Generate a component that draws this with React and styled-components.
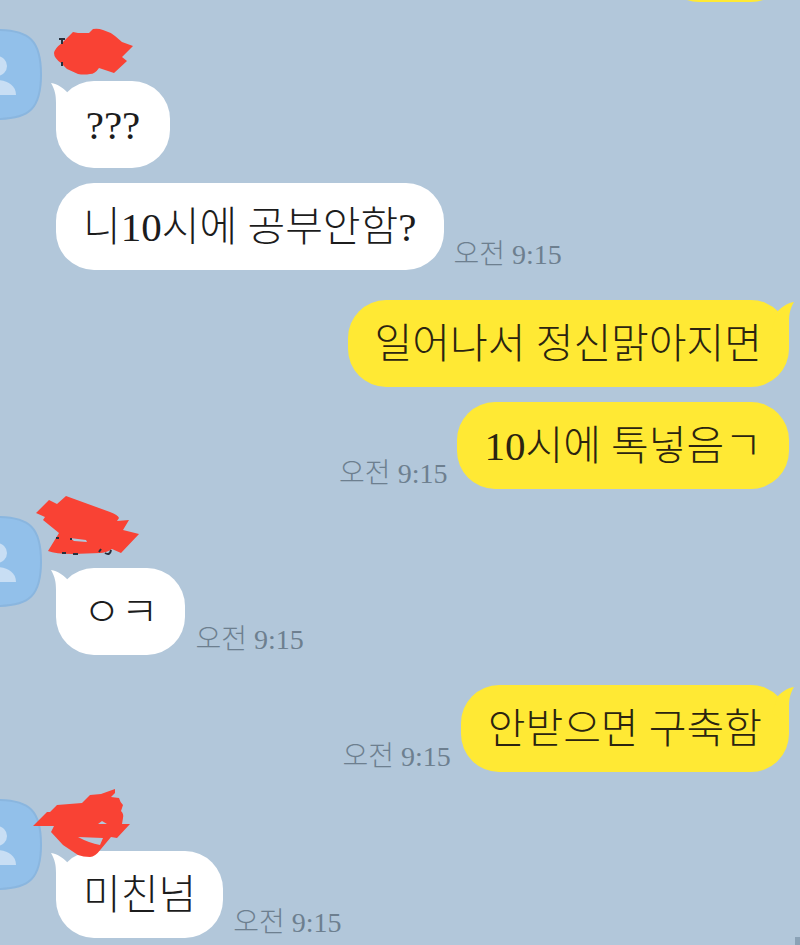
import styled, { createGlobalStyle } from 'styled-components';

const GlobalStyle = createGlobalStyle`
  * {
    box-sizing: border-box;
  }

  body {
    margin: 0;
    background-color: #b2c7da;
    font-family: 'Liberation Serif', 'Noto Sans CJK KR', serif;
    font-weight: 300;
  }
`;

const Chat = styled.main`
  position: relative;
  display: flex;
  flex-direction: column;
  min-height: 100vh;
  padding-bottom: 6px;
  overflow: hidden;
`;

const Group = styled.section`
  position: relative;
  display: flex;
  gap: 14px;
  margin-top: ${({ $mine }) => ($mine ? '30px' : '27px')};
  padding-right: 11px;
  justify-content: ${({ $mine }) => ($mine ? 'flex-end' : 'flex-start')};
`;

const Avatar = styled.svg`
  flex: none;
  width: 90px;
  height: 91px;
  margin-left: -48px;
`;

const Messages = styled.div`
  display: flex;
  flex-direction: column;
  gap: 15px;
  padding-top: ${({ $mine }) => ($mine ? '0' : '52px')};
`;

const Row = styled.div`
  display: flex;
  align-items: flex-end;
  gap: 10px;
  flex-direction: ${({ $mine }) => ($mine ? 'row-reverse' : 'row')};
`;

const Bubble = styled.p`
  position: relative;
  min-width: 114px;
  margin: 0;
  padding: 16px 27px 15px;
  border-radius: 38px;
  background-color: ${({ $mine }) => ($mine ? '#ffe934' : '#fff')};
  color: ${({ $mine }) => ($mine ? '#2b2410' : '#1c1c1c')};
  font-size: 41px;
  line-height: 56px;
  text-align: center;
  white-space: nowrap;
`;

const TailShape = styled.svg`
  position: absolute;
  top: 2px;
  ${({ $mine }) => ($mine ? 'right: -5px; transform: scaleX(-1);' : 'left: -5px;')}
  width: 24px;
  height: 40px;
  fill: ${({ $mine }) => ($mine ? '#ffe934' : '#fff')};
`;

const Time = styled.time`
  color: #6d7f8f;
  font-size: 28px;
  line-height: 30px;
  white-space: nowrap;
`;

const Scribble = styled.svg`
  position: absolute;
  top: -25px;
  left: 30px;
  width: 120px;
  height: 90px;
`;

// bottom edge of the message scrolled out above
const ScrolledBubble = styled.div`
  align-self: flex-end;
  width: 128px;
  height: 87px;
  margin: -85px 11px 0 0;
  border-radius: 38px;
  background-color: #ffe934;
`;

const Corner = styled.span`
  position: absolute;
  right: 0;
  bottom: 0;
  width: 5px;
  height: 8px;
  background-color: #8ba2b6;
`;

const scribbles = [
  {
    viewBox: '30 4 120 90',
    ink: 'M59 39H65M62 39V44M62 62V66',
    fill: 'M54 53Q55 48 62 43L73 32L78 33L89 33L93 29Q98 28 103 30Q110 32 115 36L122 42L133 46L122 57L127 61L114 73L99 68Q95 74 90 74Q84 75 78 74L67 69L61 63Q54 58 54 53Z',
  },
  {
    viewBox: '30 491 120 90',
    ink: 'M56 538H59M70 539H72M62 553H66M73 554H78M99 552L101 549M105 553Q110 556 111 550',
    fill: 'M36 513L49 500L57 504L66 496L110 512Q118 515 119 518L117 521L129 520L123 530L139 534L121 553L112 549Q106 553 100 553L73 554Q55 554 48 551L59 533L43 520L45 517ZM70 538L74 541L87 542L86 540Z',
  },
  {
    viewBox: '30 774 120 90',
    ink: '',
    fill: 'M33 826L47 812L50 812L57 805L82 803L90 795L101 794L115 789L115 793L111 797L119 798Q120 802 123 805L121 811Q124 814 123 818L122 824L130 824L117 838L111 837L101 849Q95 857 90 857Q83 857 78 855L63 845L51 832L54 826ZM78 837L103 838L100 845Q89 843 78 837ZM98 824L102 821L107 824Z',
  },
];

const groups = [
  { name: 0, items: [{ text: '???' }, { text: '니10시에 공부안함?', time: '오전 9:15' }] },
  {
    mine: true,
    items: [{ text: '일어나서 정신맑아지면' }, { text: '10시에 톡넣음ㄱ', time: '오전 9:15' }],
  },
  { name: 1, items: [{ text: 'ㅇㅋ', time: '오전 9:15' }] },
  { mine: true, items: [{ text: '안받으면 구축함', time: '오전 9:15' }] },
  { name: 2, items: [{ text: '미친넘', time: '오전 9:15' }] },
];

const Tail = ({ mine }) => (
  <TailShape $mine={mine} viewBox='0 0 24 40' aria-hidden='true'>
    <path d='M0 0C7 1 12 5 16 9L22 26L5 38V20C5 12 4 7 0 0Z' />
  </TailShape>
);

const Profile = () => (
  <Avatar viewBox='0 0 90 91' aria-hidden='true'>
    <path
      d='M45 1C78 1 89 12 89 45.500C89 79 78 90 45 90C12 90 1 79 1 45.500C1 12 12 1 45 1Z'
      fill='#92c0ea'
      stroke='#8ab6df'
      strokeWidth='2'
    />
    <circle cx='45' cy='37' r='10' fill='#c8def4' />
    <path d='M26 66C26 56 35 51 45 51S64 56 64 66Z' fill='#c8def4' />
  </Avatar>
);

const HiddenName = ({ viewBox, ink, fill }) => (
  <Scribble viewBox={viewBox} aria-hidden='true'>
    <path d={fill} fill='#f94234' fillRule='evenodd' />
    <path d={ink} fill='none' stroke='#28303c' strokeWidth='2' />
  </Scribble>
);

const MessageGroup = ({ mine, name, items }) => (
  <Group $mine={mine}>
    {!mine && <Profile />}
    <Messages $mine={mine}>
      {items.map(({ text, time }, i) => (
        <Row key={text} $mine={mine}>
          <Bubble $mine={mine}>
            {i === 0 && <Tail mine={mine} />}
            {text}
          </Bubble>
          {time && <Time>{time}</Time>}
        </Row>
      ))}
    </Messages>
    {!mine && <HiddenName {...scribbles[name]} />}
  </Group>
);

const App = () => {
  return (
    <>
      <GlobalStyle />
      <Chat>
        <ScrolledBubble />
        {groups.map((group, i) => (
          <MessageGroup key={i} {...group} />
        ))}
        <Corner />
      </Chat>
    </>
  );
};

export default App;
